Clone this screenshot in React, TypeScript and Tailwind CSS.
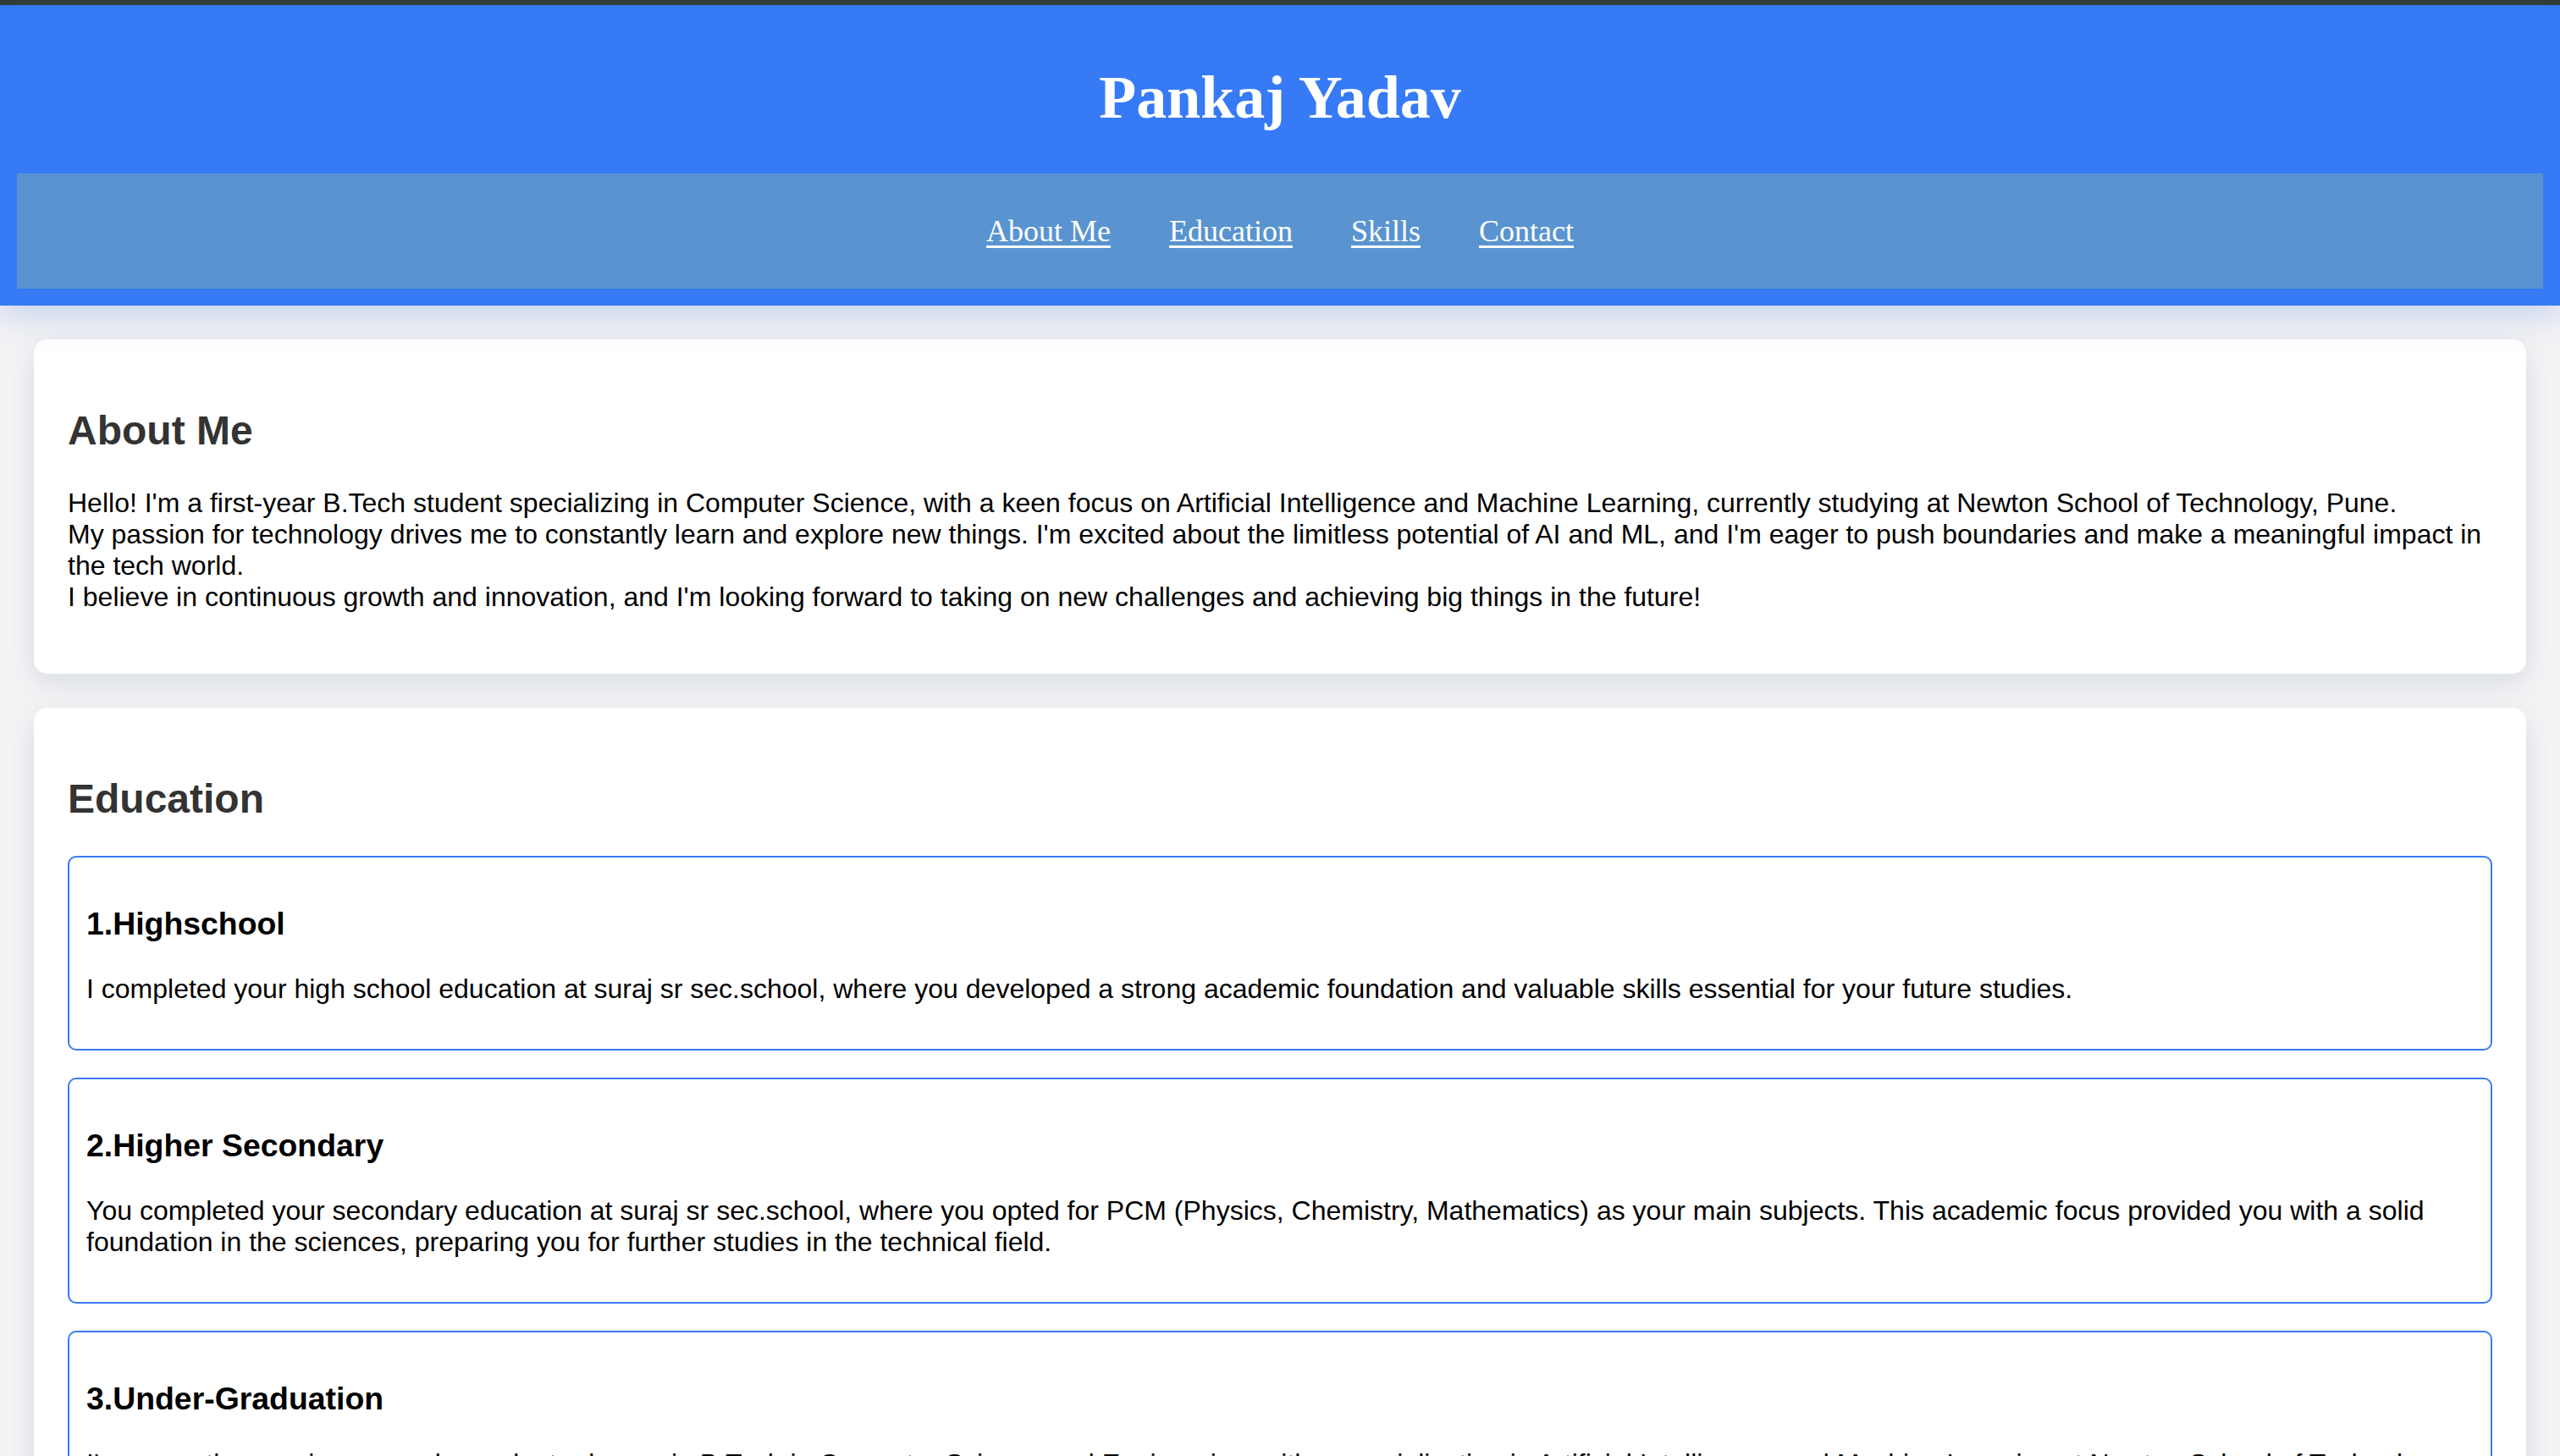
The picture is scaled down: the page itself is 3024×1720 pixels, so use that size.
import React from 'react';

const education = [
  {
    id: 1,
    title: '1.Highschool',
    text: 'I completed your high school education at suraj sr sec.school, where you developed a strong academic foundation and valuable skills essential for your future studies.',
  },
  {
    id: 2,
    title: '2.Higher Secondary',
    text: 'You completed your secondary education at suraj sr sec.school, where you opted for PCM (Physics, Chemistry, Mathematics) as your main subjects. This academic focus provided you with a solid foundation in the sciences, preparing you for further studies in the technical field.',
  },
  {
    id: 3,
    title: '3.Under-Graduation',
    text: "I'm currently pursuing my undergraduate degree in B.Tech in Computer Science and Engineering, with a specialization in Artificial Intelligence and Machine Learning at Newton School of Technology, Pune, building strong foundations in programming, data structures and problem solving.",
  },
];

const navLinks = ['About Me', 'Education', 'Skills', 'Contact'];

const App = () => {
  return (
    <div className="min-h-screen bg-[#f3f3f4] font-['Liberation_Sans',Arial,sans-serif] text-black">
      {/* Top strip */}
      <div className="h-[6px] bg-[#303b34]" />

      {/* Header */}
      <header className="relative z-10 bg-[#367af6] p-[20px] shadow-[0_12px_36px_rgba(54,110,220,0.24)]">
        <h1 className="my-[48px] text-center font-['Liberation_Serif','Times_New_Roman',serif] text-[72px] font-bold leading-[normal] text-white">
          Pankaj Yadav
        </h1>
        <nav className="flex justify-center gap-[69px] bg-[#5994d0] py-[47px]">
          {navLinks.map((link) => (
            <a
              key={link}
              href={`#${link.toLowerCase().replace(' ', '-')}`}
              className="font-['Liberation_Serif','Times_New_Roman',serif] text-[36px] leading-[normal] text-white underline decoration-[3px] underline-offset-[5px]"
            >
              {link}
            </a>
          ))}
        </nav>
      </header>

      <main className="flex flex-col gap-[40px] p-[40px]">
        {/* About */}
        <section className="rounded-[16px] bg-white p-[40px] shadow-[0_10px_30px_rgba(40,70,140,0.13)]">
          <h2 className="my-[40px] text-[48px] font-bold leading-[normal] text-[#333]">About Me</h2>
          <p className="my-[32px] text-[32px] leading-[normal]">
            Hello! I'm a first-year B.Tech student specializing in Computer Science, with a keen focus on Artificial Intelligence and Machine Learning, currently studying at Newton School of Technology, Pune.
            <br />
            My passion for technology drives me to constantly learn and explore new things. I'm excited about the limitless potential of AI and ML, and I'm eager to push boundaries and make a meaningful impact in the tech world.
            <br />
            I believe in continuous growth and innovation, and I'm looking forward to taking on new challenges and achieving big things in the future!
          </p>
        </section>

        {/* Education */}
        <section className="rounded-[16px] bg-white p-[40px] shadow-[0_10px_30px_rgba(40,70,140,0.13)]">
          <h2 className="my-[40px] text-[48px] font-bold leading-[normal] text-[#333]">Education</h2>
          <div className="flex flex-col gap-[32px]">
            {education.map((item) => (
              <div key={item.id} className="rounded-[10px] border-2 border-[#3a7bf1] p-[20px]">
                <h3 className="my-[37px] text-[37.4px] font-bold leading-[normal]">{item.title}</h3>
                <p className="my-[32px] text-[32px] leading-[normal]">{item.text}</p>
              </div>
            ))}
          </div>
        </section>
      </main>
    </div>
  );
};

export default App;
